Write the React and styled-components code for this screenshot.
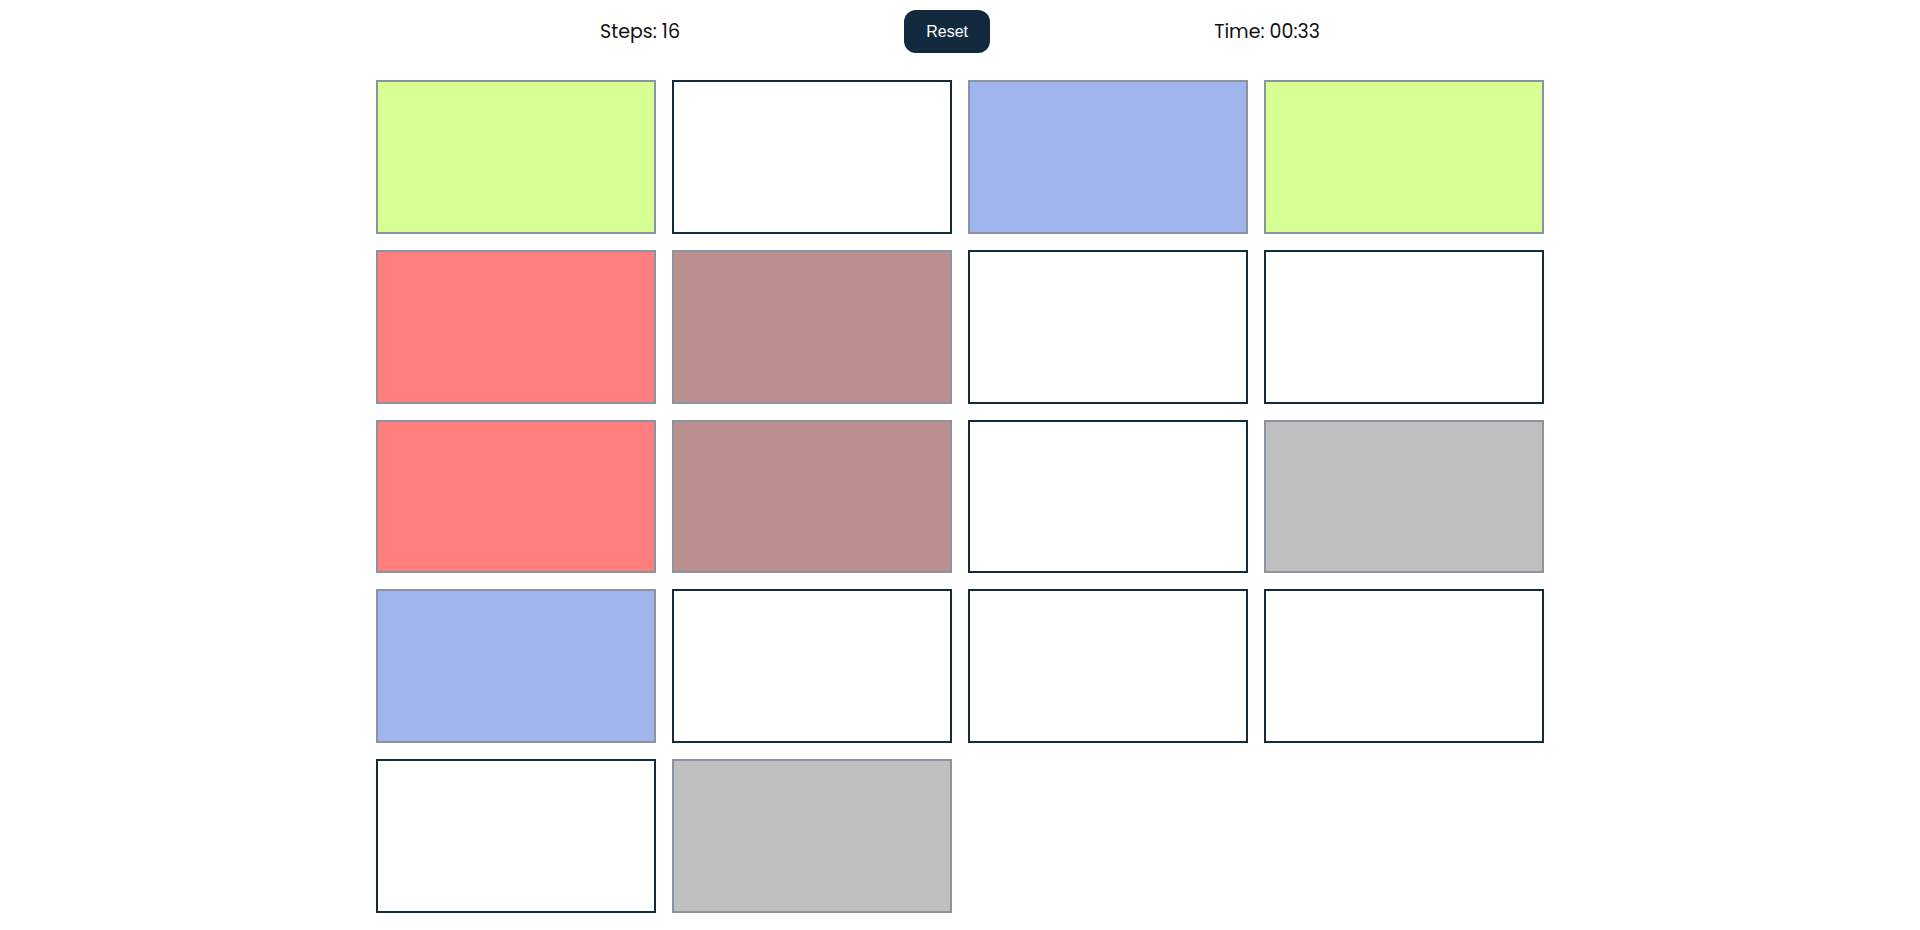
import React from "react";
import styled, { createGlobalStyle } from "styled-components";

const GlobalStyle = createGlobalStyle`
  html, body { margin: 0; padding: 0; background: #ffffff; }
  body { font-family: Poppins, "Open Sans", sans-serif; color: #111111; }
`;

const Board = styled.main`
  width: 1168px;
  margin: 0 auto;
  padding-top: 10px;
`;

const Header = styled.header`
  display: flex;
  justify-content: space-evenly;
  align-items: center;
  height: 43px;
`;

const Stat = styled.span`
  font-family: Poppins, "Open Sans", sans-serif;
  font-size: 19px;
  line-height: 1;
  color: #111111;
`;

const ResetButton = styled.button`
  height: 43px;
  width: 86px;
  padding: 0;
  border: none;
  border-radius: 12px;
  background: #132a3e;
  color: #ffffff;
  font-family: "Liberation Sans", Arial, sans-serif;
  font-size: 16px;
  cursor: pointer;
`;

const Grid = styled.section`
  margin-top: 27px;
  display: grid;
  grid-template-columns: repeat(4, 280px);
  gap: 16px;
`;

const Card = styled.div`
  box-sizing: border-box;
  height: 153.75px;
  border: 2px solid ${(p) => (p.$color ? "#8a949e" : "#142b3b")};
  background: ${(p) => p.$color || "#ffffff"};
`;

const LIME = "#d8ff94";
const BLUE = "#a0b4ee";
const RED = "#ff7f7f";
const BROWN = "#bc8f8f";
const GRAY = "#bfbfbf";

const cards = [
  LIME, null, BLUE, LIME,
  RED, BROWN, null, null,
  RED, BROWN, null, GRAY,
  BLUE, null, null, null,
  null, GRAY,
];

export default function App() {
  return (
    <>
      <GlobalStyle />
      <Board>
        <Header>
          <Stat>Steps: 16</Stat>
          <ResetButton type="button">Reset</ResetButton>
          <Stat>Time: 00:33</Stat>
        </Header>
        <Grid>
          {cards.map((c, i) => (
            <Card key={i} $color={c} />
          ))}
        </Grid>
      </Board>
    </>
  );
}
